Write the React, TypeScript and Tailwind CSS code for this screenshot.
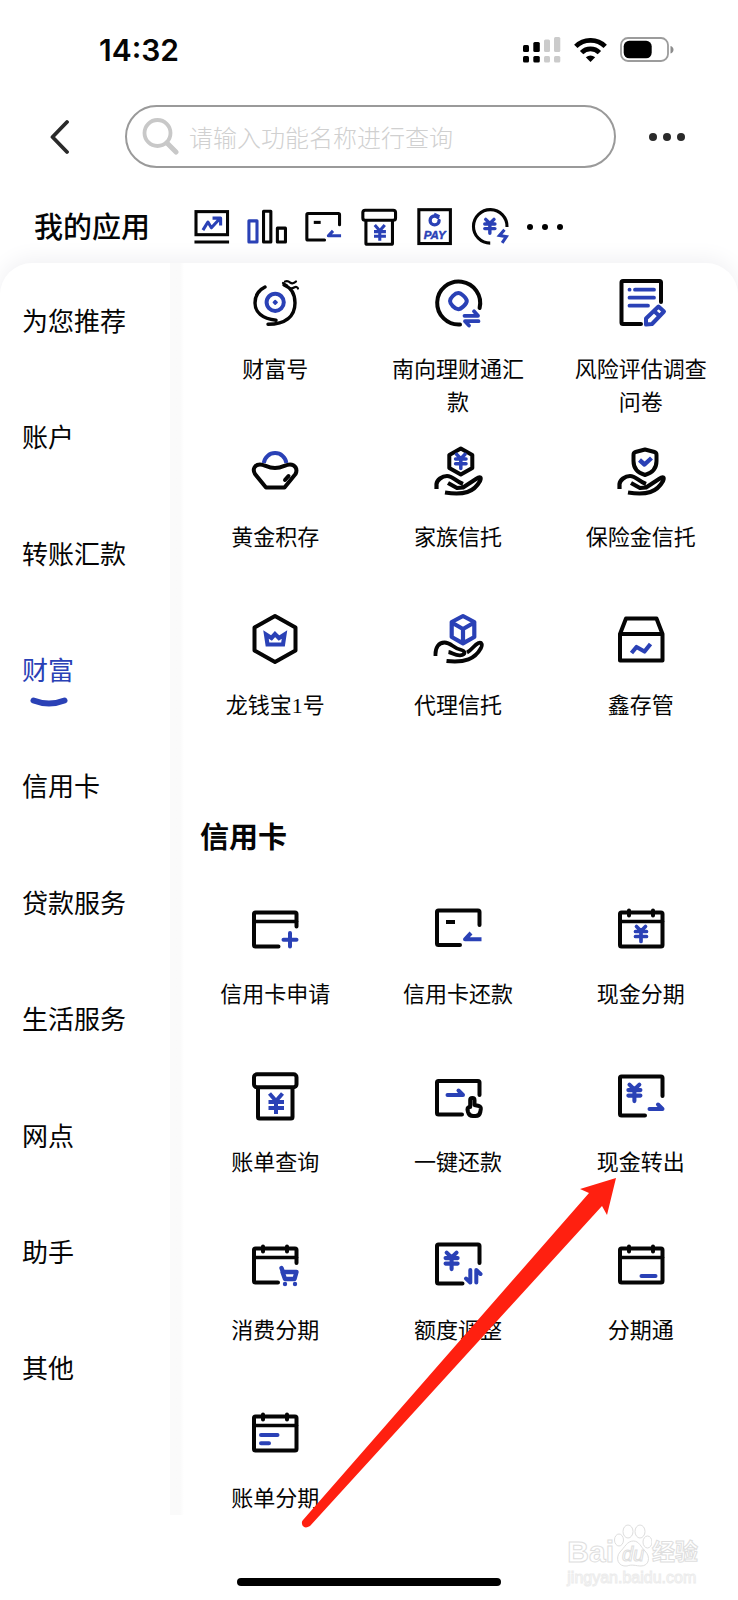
import type { ReactNode } from 'react'

const BLUE = '#2a41b6'

interface AppItem {
  label: string
  icon: ReactNode
}

function Icon({ children, className = 'size-[52px]' }: { children: ReactNode; className?: string }) {
  return (
    <svg
      viewBox="0 0 52 52"
      className={`shrink-0 ${className}`}
      fill="none"
      stroke="#050505"
      strokeWidth="4"
      strokeLinecap="round"
      strokeLinejoin="round"
      aria-hidden="true"
    >
      {children}
    </svg>
  )
}

function Yen({ x, y, s = 1 }: { x: number; y: number; s?: number }) {
  return (
    <path
      d="M-4.5 -7 L0 -2.5 L4.5 -7 M-5.5 -2 H5.5 M-5.5 3 H5.5 M0 -2 V8"
      transform={`translate(${x} ${y}) scale(${s})`}
      stroke={BLUE}
      strokeWidth={3.7}
    />
  )
}

function Hand() {
  return (
    <path
      d="M4.5 44 V39 C5 35 10 31 15 31 C21 31 23 36 31 39 M16 38 L25 43 L31 42.5 L44 34 C48.5 31 49.5 32.5 48 36 C42 47 32 50.5 13 47.5"
      strokeWidth="4.2"
      strokeLinecap="butt"
    />
  )
}

function Calendar({ cut = false }: { cut?: boolean }) {
  return (
    <>
      {cut ? (
        <path d="M47.5 25 V12 Q47.5 10.5 46 10.5 H6.5 Q5 10.5 5 12 V43 Q5 44.5 6.5 44.5 H29" />
      ) : (
        <rect x="5" y="10.5" width="42.5" height="34" rx="1.5" />
      )}
      <path d="M5 19.5 H47.5" strokeWidth="3.6" />
      <path d="M14 8.5 V13.5 M38 8.5 V13.5" />
    </>
  )
}

const cardRepay = (
  <>
    <path d="M47.5 23 V10 Q47.5 8.5 46 8.5 H6.5 Q5 8.5 5 10 V41.5 Q5 43 6.5 43 H28" />
    <path d="M14 20 H23" strokeLinecap="butt" />
    <path d="M49.5 37.3 H33 L39 31" stroke={BLUE} strokeLinecap="butt" strokeWidth="4" />
  </>
)

const archiveYen = (
  <>
    <rect x="5" y="4.3" width="42.5" height="13" rx="3" />
    <path d="M9 18 V47 Q9 48.5 10.5 48.5 H42 Q43.5 48.5 43.5 47 V18" />
    <path
      d="M20.5 23.5 L27 31 L33.5 23.5 M19.5 32 H35 M19.5 38 H35 M27 31 V44"
      stroke={BLUE}
      strokeLinecap="butt"
    />
  </>
)

const myApps: ReactNode[] = [
  <>
    <rect x="6.5" y="6" width="41" height="30" strokeLinejoin="miter" />
    <path d="M4.5 45.5 H49.5" strokeLinecap="butt" />
    <path d="M15.5 30 L22 19.5 L26.5 27 L37 15.5 M28 14.5 H38.5 V24" stroke={BLUE} strokeLinecap="butt" />
  </>,
  <>
    <rect x="2.5" y="18" width="10.5" height="27.5" stroke={BLUE} />
    <rect x="21.5" y="5.5" width="9.5" height="40" />
    <rect x="39.5" y="27.5" width="10.5" height="18" />
  </>,
  cardRepay,
  archiveYen,
  <>
    <rect x="5" y="3.5" width="41" height="44" strokeLinejoin="miter" />
    <circle cx="25.5" cy="17.500" r="5.800" stroke={BLUE} strokeWidth="4.400" strokeDasharray="31 5.400" />
    <path d="M25 9 L32 12" stroke={BLUE} strokeWidth="3" strokeLinecap="butt" />
    <text
      x="25.5"
      y="41"
      textAnchor="middle"
      fill={BLUE}
      stroke={BLUE}
      strokeWidth="0.6"
      className="font-['Liberation_Sans',sans-serif] text-[15px] font-bold italic"
    >
      PAY
    </text>
  </>,
  <>
    <path d="M46.8 26 A21.8 21.8 0 1 0 25 47" strokeLinecap="butt" />
    <Yen x={24.5} y={24.5} s={1.2} />
    <path d="M43.5 29.5 L37 37 L46 38.5 L40.500 46.500" stroke={BLUE} strokeWidth="4" strokeLinecap="butt" strokeLinejoin="miter" />
  </>,
]

const wealthApps: AppItem[] = [
  {
    label: '财富号',
    icon: (
      <>
        <path d="M16 10 C8 14 6 20 6 26 C6 35 13 41.5 27 43.2" strokeWidth="3.4" />
        <path d="M35 8 C43 11 46 18 46 26 C46 40 36 47 19 47.3" strokeWidth="3.4" />
        <path d="M34 6 L38 8.5 M36 4.5 Q39 3.5 41 5.5 Q44 7.5 47 4.5 M40 11 Q43 12 45 10.5 Q48 9 49 11.5" strokeWidth="2.2" />
        <circle cx="26.2" cy="25.3" r="8.6" stroke={BLUE} strokeWidth="4" />
        <path d="M26.2 23.6 L28 25.3 L26.2 27 L24.5 25.3 Z" stroke={BLUE} strokeWidth="1.8" fill={BLUE} />
      </>
    ),
  },
  {
    label: '南向理财通汇款',
    icon: (
      <>
        <path d="M47.6 31 A21.5 21.5 0 1 0 28 47.5" />
        <path d="M26.3 16 C29 16 34.8 21 34.8 24 C34.8 27 29 32.2 26.3 32.2 C23 32.2 18 27 18 24 C18 21 23 16 26.3 16 Z" stroke={BLUE} />
        <path d="M32.5 38.8 H46 L42 34.3 M46.500 44.2 H33 L37 48.5" stroke={BLUE} strokeWidth="3.8" />
      </>
    ),
  },
  {
    label: '风险评估调查问卷',
    icon: (
      <>
        <path d="M46 25 V5.5 Q46 4 44.5 4 H8 Q6.5 4 6.5 5.5 V45.5 Q6.5 47 8 47 H26" />
        <path d="M14.5 12.7 H14.6 M20 12.7 H39 M14.5 20.7 H39 M14.5 28.7 H33" stroke={BLUE} strokeWidth="3.8" />
        <path d="M31 47.5 V41.5 L43.5 29.5 L49 34.5 L37 47 Z M39 34 L44.5 39" stroke={BLUE} />
      </>
    ),
  },
  {
    label: '黄金积存',
    icon: (
      <>
        <path d="M14.8 18 A11.4 11.4 0 0 1 37.4 18" stroke={BLUE} strokeLinecap="butt" />
        <path d="M17 42.5 H35.5 L46.5 29 C49 24 46 19.5 41 19.5 C36 19.5 34 23 26 23 C18 23 16 19.5 11 19.5 C6 19.5 3 24 6 29 Z" />
        <path d="M39.5 31 L36 35" />
      </>
    ),
  },
  {
    label: '家族信托',
    icon: (
      <>
        <path d="M28.8 3.6 L40.3 10 V23 L28.8 29.5 L17.3 23 V10 Z" />
        <Yen x={28.8} y={16} s={0.95} />
        <Hand />
      </>
    ),
  },
  {
    label: '保险金信托',
    icon: (
      <>
        <path d="M30 4.5 L39.5 7 Q41.5 7.5 41.5 10 V16 C41.5 23 37 28 30 30 C23 28 18.5 23 18.5 16 V10 Q18.5 7.5 20.5 7 Z" />
        <path d="M24.5 15 L29.5 19.5 L36.5 13" stroke={BLUE} strokeLinecap="butt" strokeWidth="4.4" />
        <Hand />
      </>
    ),
  },
  {
    label: '龙钱宝1号',
    icon: (
      <>
        <path d="M26 3 L46.5 14.5 V37.5 L26 49 L5.5 37.5 V14.5 Z" />
        <path d="M17 21.5 L18.5 31.5 H34 L35.5 21.500 L30 25 L26 21 L22.5 25 Z" stroke={BLUE} strokeLinejoin="miter" strokeWidth="4.2" />
      </>
    ),
  },
  {
    label: '代理信托',
    icon: (
      <>
        <path d="M31 3 L42.3 9 V24 L31 30.3 L19.7 24 V9 Z M19.7 9.5 L31 16 L42.3 9.5 M31 16 V30" stroke={BLUE} strokeWidth="4.2" />
        <path
          d="M3.5 43 C3 34 7 29.5 12.5 29.5 C19 29.5 21 35 28 36.5 C34 38 34 42 28 42.3 C23 42.5 20 39.5 16.5 39 M35 39.5 C40 37 42 32 46.5 30 C50 29 50.5 32 49 35 C43 46 33 50 14.5 48"
          strokeWidth="3.8"
          strokeLinecap="butt"
        />
      </>
    ),
  },
  {
    label: '鑫存管',
    icon: (
      <>
        <path d="M5 21 L11 5.5 H41.5 L47.5 21 V47.5 H5 Z M5 21 H47.5" />
        <path d="M16.5 40 L21.5 34 L29.5 38.5 L35.5 31" stroke={BLUE} strokeLinecap="butt" strokeWidth="4.2" />
      </>
    ),
  },
]

const cardApps: AppItem[] = [
  {
    label: '信用卡申请',
    icon: (
      <>
        <path d="M47.5 24.5 V12 Q47.5 10.5 46 10.5 H6.5 Q5 10.5 5 12 V43 Q5 44.5 6.5 44.5 H29.5" />
        <path d="M5 19.5 H47.5" strokeWidth="3.6" />
        <path d="M34.5 37.7 H47.5 M41 31 V44.5" stroke={BLUE} />
      </>
    ),
  },
  { label: '信用卡还款', icon: cardRepay },
  {
    label: '现金分期',
    icon: (
      <>
        <Calendar />
        <Yen x={26} y={31.5} />
      </>
    ),
  },
  { label: '账单查询', icon: archiveYen },
  {
    label: '一键还款',
    icon: (
      <>
        <path d="M47.5 25 V12.5 Q47.5 11 46 11 H6.5 Q5 11 5 12.5 V43 Q5 44.5 6.5 44.5 H30" />
        <path d="M15.5 25 H31 L26.5 20.5" stroke={BLUE} />
        <path d="M38.2 37 V30 C38.2 27.3 42.5 27.3 42.5 30 V35 L47 36 Q49 36.8 48.8 39 L48.3 42 Q47.5 46 43.5 46 H41 Q37 46 36 42 L35.5 39.5 Q35.5 37 38.2 37" />
      </>
    ),
  },
  {
    label: '现金转出',
    icon: (
      <>
        <path d="M47.5 26 V8 Q47.5 6.5 46 6.5 H6.5 Q5 6.5 5 8 V44 Q5 45.5 6.5 45.5 H30" />
        <Yen x={19.4} y={22.3} s={1.1} />
        <path d="M34.5 39 H47.5 L43 34.5" stroke={BLUE} />
      </>
    ),
  },
  {
    label: '消费分期',
    icon: (
      <>
        <Calendar cut />
        <path d="M32.5 30 L34 34 H47.5 L45.5 41 H36 L33.5 34" stroke={BLUE} strokeWidth="4.4" />
        <circle cx="36" cy="46" r="2.2" fill={BLUE} stroke="none" />
        <circle cx="46" cy="46" r="2.2" fill={BLUE} stroke="none" />
      </>
    ),
  },
  {
    label: '额度调整',
    icon: (
      <>
        <path d="M47.5 25 V8 Q47.5 6.5 46 6.5 H6.5 Q5 6.5 5 8 V44 Q5 45.5 6.5 45.5 H30.5" />
        <Yen x={19.6} y={22.3} s={1.1} />
        <path d="M38.3 32 V44.5 L34 40.5 M44.3 44.5 V32 L48.5 36" stroke={BLUE} />
      </>
    ),
  },
  {
    label: '分期通',
    icon: (
      <>
        <Calendar />
        <path d="M26.5 38 H40.5" stroke={BLUE} />
      </>
    ),
  },
  {
    label: '账单分期',
    icon: (
      <>
        <Calendar />
        <path d="M12 29 H28.5 M12 37.3 H20" stroke={BLUE} />
      </>
    ),
  },
]

const categories = ['为您推荐', '账户', '转账汇款', '财富', '信用卡', '贷款服务', '生活服务', '网点', '助手', '其他']

function AppGrid({ items }: { items: AppItem[] }) {
  return (
    <div className="grid auto-rows-[123px] grid-cols-3 gap-y-[45px]">
      {items.map((item) => (
        <button key={item.label} type="button" className="flex flex-col items-center gap-6 px-5 pt-[14px]">
          <Icon>{item.icon}</Icon>
          <span className="font-['Liberation_Serif','Noto_Sans_CJK_SC',serif] text-[22px] leading-[33px]">
            {item.label}
          </span>
        </button>
      ))}
    </div>
  )
}

function StatusBar() {
  return (
    <div className="flex items-center justify-between pt-8 pr-16 pb-[37px] pl-[99px]">
      <span className="font-[Inter,sans-serif] text-[30px] leading-9 font-semibold">14:32</span>
      <div className="flex items-center gap-[13px]">
        <svg width="38" height="26" viewBox="0 0 38 26" aria-hidden="true">
          <rect x="0" y="8" width="6" height="7" rx="1.5" />
          <rect x="10.3" y="5" width="6.5" height="10" rx="1.5" />
          <rect x="0" y="19" width="6" height="6.5" rx="1.5" />
          <rect x="10.3" y="19" width="6.5" height="6.5" rx="1.5" />
          <g fill="#cbcbcb">
            <rect x="21" y="2.5" width="6" height="12.5" rx="1.5" />
            <rect x="31" y="0" width="6.3" height="15" rx="1.5" />
            <rect x="21" y="19" width="6" height="6.5" rx="1.5" />
            <rect x="31" y="19" width="6.3" height="6.5" rx="1.5" />
          </g>
        </svg>
        <svg width="33" height="24" viewBox="0 0 33 24" fill="none" stroke="#000" strokeWidth="4.8" aria-hidden="true">
          <path d="M1.8 8.4 A21 21 0 0 1 31.2 8.4" />
          <path d="M7.6 14.6 A12.6 12.6 0 0 1 25.4 14.6" />
          <path d="M16.5 24 L11.8 19.2 Q16.5 15.6 21.2 19.2 Z" fill="#000" stroke="none" />
        </svg>
        <svg width="54" height="26" viewBox="0 0 54 26" aria-hidden="true">
          <rect x="1" y="1" width="47" height="23" rx="7" fill="none" stroke="#9c9c9c" strokeWidth="1.8" />
          <rect x="3.7" y="3.8" width="28" height="17.5" rx="5.5" />
          <path d="M50.5 9 Q53.5 10 53.5 12.7 Q53.5 15.4 50.5 16.5 Z" fill="#8c8c8c" />
        </svg>
      </div>
    </div>
  )
}

function Watermark() {
  return (
    <div className="pointer-events-none absolute right-10 bottom-3 font-['Liberation_Sans','Noto_Sans_CJK_SC',sans-serif] text-white [-webkit-text-stroke:1px_#dedede]">
      <div className="flex items-end font-bold">
        <span className="text-[30px] leading-8">Bai</span>
        <span className="relative flex h-11 w-[38px] items-end justify-center">
          <svg viewBox="0 0 38 44" className="absolute inset-0" fill="#fff" stroke="#dedede" aria-hidden="true">
            <ellipse cx="5" cy="16" rx="4.5" ry="6" />
            <ellipse cx="14" cy="7.5" rx="5" ry="6.5" />
            <ellipse cx="26" cy="7.5" rx="5" ry="6.5" />
            <ellipse cx="33.5" cy="18" rx="4.5" ry="6" />
            <path d="M19.5 17 C25 17 27 23 31 27 C37 33 35 42 27 42 C22 42 18 40 13 42 C4 43 1 34 6 28 C11 23 13 17 19.5 17 Z" />
          </svg>
          <span className="relative text-xl leading-7 font-normal italic">du</span>
        </span>
        <span className="text-[23px] leading-8">经验</span>
      </div>
      <div className="text-base leading-5 [-webkit-text-stroke:1px_#ececec]">jingyan.baidu.com</div>
    </div>
  )
}

export default function App() {
  return (
    <div className="relative min-h-screen overflow-hidden bg-white font-['Noto_Sans_CJK_SC',sans-serif] text-[#050505]">
      <StatusBar />

      <header className="flex items-center pr-[53px] pl-[50px]">
        <button type="button" aria-label="返回" className="mr-14">
          <svg width="19" height="36" viewBox="0 0 19 36" fill="none" stroke="#2a2a2a" strokeWidth="3.8" strokeLinecap="round" strokeLinejoin="round">
            <path d="M17 3 L2.5 18 L17 33" />
          </svg>
        </button>
        <label className="flex h-[63px] min-w-0 flex-1 items-center gap-[10px] rounded-full border-2 border-[#9a9a9a] pr-6 pl-[15px]">
          <svg width="37" height="37" viewBox="0 0 37 37" fill="none" stroke="#c8c8c8" strokeWidth="3.8" className="shrink-0" aria-hidden="true">
            <circle cx="15.5" cy="15" r="13" />
            <path d="M25 25 L34 34" strokeWidth="5" strokeLinecap="round" />
          </svg>
          <input
            type="text"
            aria-label="搜索"
            placeholder="请输入功能名称进行查询"
            className="min-w-0 flex-1 text-2xl font-light outline-none placeholder:text-[#d0d0d0]"
          />
        </label>
        <button type="button" aria-label="更多" className="ml-[33px] flex gap-[6px]">
          <span className="size-2 rounded-full bg-[#2a2a2a]" />
          <span className="size-2 rounded-full bg-[#2a2a2a]" />
          <span className="size-2 rounded-full bg-[#2a2a2a]" />
        </button>
      </header>

      <section className="flex items-center gap-[41px] pt-[39px] pb-4 pl-[34px]">
        <h2 className="pb-1 text-[29px] leading-9 font-medium">我的应用</h2>
        <div className="flex gap-4">
          {myApps.map((icon, i) => (
            <Icon key={i} className="size-10">
              {icon}
            </Icon>
          ))}
          <button type="button" aria-label="全部应用" className="flex items-center gap-[9px]">
            <span className="size-[6px] rounded-full bg-black" />
            <span className="size-[6px] rounded-full bg-black" />
            <span className="size-[6px] rounded-full bg-black" />
          </button>
        </div>
      </section>

      <div className="flex rounded-t-[32px] bg-white shadow-[0_-4px_22px_#f0f0f3]">
        <nav className="flex w-[170px] shrink-0 flex-col pb-[88px] pl-[22px]">
          {categories.map((name) => (
            <a
              key={name}
              href="#"
              aria-current={name === '财富' ? 'page' : undefined}
              className={`relative flex flex-1 items-center pb-[3px] text-[26px] leading-10 ${name === '财富' ? 'text-[#2a41b6]' : ''}`}
            >
              {name}
              {name === '财富' && (
                <svg
                  viewBox="0 0 38 10"
                  className="absolute bottom-[22px] left-2 h-[10px] w-[38px]"
                  fill="none"
                  stroke={BLUE}
                  strokeWidth="6"
                  strokeLinecap="round"
                  aria-hidden="true"
                >
                  <path d="M3.5 3.5 Q19 9.5 34.5 3.5" />
                </svg>
              )}
            </a>
          ))}
        </nav>
        <div className="w-[14px] shrink-0 bg-linear-to-r from-[#fafafa] from-70% to-white" />
        <main className="min-w-0 flex-1 pr-[6px]">
          <AppGrid items={wealthApps} />
          <h2 className="pt-[93px] pb-[33px] pl-4 text-[29px] leading-10 font-bold">信用卡</h2>
          <AppGrid items={cardApps} />
        </main>
      </div>

      <footer className="relative bg-white pt-[63px] pb-[14px]">
        <div className="mx-auto h-2 w-[264px] rounded-full bg-black" />
        <Watermark />
      </footer>

      {/* Pointer to the cash transfer entry */}
      <svg
        width="320"
        height="356"
        viewBox="0 0 320 356"
        className="pointer-events-none absolute top-[1175px] left-[300px]"
        fill="#ff2010"
        aria-hidden="true"
      >
        <path d="M3 345 L289 18 L280 14 L316 3 L307 40 L302 31 L10 351 Q5 354 2.5 350.5 Q1 347 3 345 Z" />
      </svg>
    </div>
  )
}
